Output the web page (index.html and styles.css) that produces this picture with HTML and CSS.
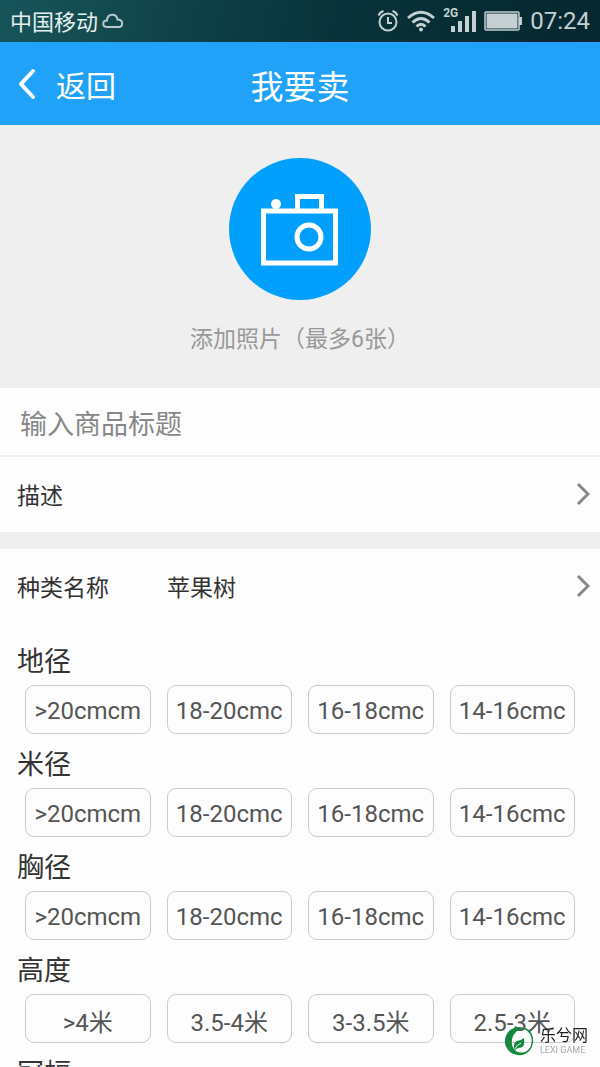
FILE: index.html
```html
<!DOCTYPE html>
<html lang="zh-CN">
<head>
    <meta charset="utf-8">
    <meta name="viewport" content="width=device-width, initial-scale=1">
    <title>我要卖</title>
    <link rel="stylesheet" href="styles.css">
</head>
<body>
    <div class="status-bar">
        <span class="carrier">中国移动</span>
        <svg class="cloud" width="22" height="16" viewBox="0 0 22 16" fill="none" stroke="#b9c9cb" stroke-width="2">
            <path d="M5 14C0 14 0 7.500 5 7.500C5.500 0 14.500 0 15.500 6.500C21.500 6.500 21.500 14 17 14Z"/>
        </svg>
        <div class="status-icons">
            <svg width="22" height="24" viewBox="0 0 22 24" fill="none" stroke="#c4d0d2" stroke-width="2">
                <circle cx="11" cy="13" r="8.500"/>
                <path d="M11 8V14H15M1.500 6.500Q3 3 6.500 2M20.500 6.500Q19 3 15.500 2"/>
            </svg>
            <svg width="28" height="22" viewBox="0 0 28 22" fill="none" stroke="#c4d0d2" stroke-width="3">
                <path d="M1 8Q14 -3.500 27 8M5.500 12.500Q14 4.500 22.500 12.500M9.500 16.500Q14 12 18.500 16.500"/>
                <circle cx="14" cy="19.500" r="2" fill="#c4d0d2" stroke="none"/>
            </svg>
            <div class="signal">
                <span class="network">2G</span>
                <svg width="25" height="21" viewBox="0 0 25 21" fill="#c4d0d2">
                    <path d="M0 15h4v6H0zM7 10h4v11H7zM14 5h4v16h-4zM21 0h4v21h-4z"/>
                </svg>
            </div>
            <svg width="38" height="20" viewBox="0 0 38 20">
                <rect x="1" y="1" width="34" height="18" rx="1" fill="none" stroke="#c4d0d2" stroke-width="1.500"/>
                <rect x="2.500" y="2.500" width="31" height="15" fill="#c4d0d2"/>
                <path d="M35 6h3v8h-3z" fill="#c4d0d2"/>
            </svg>
            <span class="clock">07:24</span>
        </div>
    </div>

    <header class="nav-bar">
        <button type="button" class="back">
            <svg width="18" height="32" viewBox="0 0 18 32" fill="none" stroke="#fff" stroke-width="4" stroke-linecap="round" stroke-linejoin="round">
                <path d="M15 3L3 16L15 29"/>
            </svg>
            返回
        </button>
        <h1>我要卖</h1>
    </header>

    <main>
        <section class="photo">
            <button type="button" class="add-photo" aria-label="添加照片">
                <svg width="142" height="142" viewBox="0 0 142 142" fill="none" stroke="#fff" stroke-width="5">
                    <rect x="34.500" y="53" width="72" height="52"/>
                    <path d="M68.500 53V38.500H92.500V53"/>
                    <circle cx="80" cy="79" r="12"/>
                    <path d="M47 45V53"/>
                    <circle cx="47" cy="46" r="5" fill="#fff" stroke="none"/>
                </svg>
            </button>
            <p>添加照片（最多6张）</p>
        </section>

        <input type="text" class="title-input" placeholder="输入商品标题" aria-label="商品标题">

        <button type="button" class="row">
            <span class="row-label">描述</span>
            <svg class="arrow" width="14" height="24" viewBox="0 0 14 24"><path d="M2 2L12 12L2 22"/></svg>
        </button>

        <div class="divider"></div>

        <button type="button" class="row">
            <span class="row-label">种类名称</span>
            <span>苹果树</span>
            <svg class="arrow" width="14" height="24" viewBox="0 0 14 24"><path d="M2 2L12 12L2 22"/></svg>
        </button>

        <div class="groups">
            <section class="group">
                <h2>地径</h2>
                <div class="options">
                    <button type="button">&gt;20cmcm</button>
                    <button type="button">18-20cmc</button>
                    <button type="button">16-18cmc</button>
                    <button type="button">14-16cmc</button>
                </div>
            </section>
            <section class="group">
                <h2>米径</h2>
                <div class="options">
                    <button type="button">&gt;20cmcm</button>
                    <button type="button">18-20cmc</button>
                    <button type="button">16-18cmc</button>
                    <button type="button">14-16cmc</button>
                </div>
            </section>
            <section class="group">
                <h2>胸径</h2>
                <div class="options">
                    <button type="button">&gt;20cmcm</button>
                    <button type="button">18-20cmc</button>
                    <button type="button">16-18cmc</button>
                    <button type="button">14-16cmc</button>
                </div>
            </section>
            <section class="group">
                <h2>高度</h2>
                <div class="options">
                    <button type="button">&gt;4米</button>
                    <button type="button">3.5-4米</button>
                    <button type="button">3-3.5米</button>
                    <button type="button">2.5-3米</button>
                </div>
            </section>
            <section class="group">
                <h2>冠幅</h2>
            </section>
        </div>
    </main>

    <div class="watermark">
        <svg width="30" height="30" viewBox="0 0 30 30">
            <path d="M21 2.500A14 14 0 1 0 28 20C25 25 21 27 17 26.500C10 26 7 20 8 14C9 7 14 3 21 2.500Z" fill="#15883e"/>
            <path d="M20 2Q29 6 28.500 16Q27 27 16 28.500" fill="none" stroke="#15883e" stroke-width="1.500"/>
            <path d="M20 12Q22 22 14 22L10 25Q9 16 13 15Q17 14.500 20 12Z" fill="#15883e"/>
            <path d="M10.500 23.500Q13 18.500 17 17" fill="none" stroke="#fff"/>
        </svg>
        <div class="brand">
            <span class="brand-name">乐兮网</span>
            <span class="brand-sub">LEXI GAME</span>
        </div>
    </div>
</body>
</html>
```
FILE: styles.css
```css
* {
    box-sizing: border-box;
}

body {
    margin: 0;
    height: 100vh;
    display: flex;
    flex-direction: column;
    overflow: hidden;
    background-color: #fdfdfd;
    color: #333;
    font-family: Roboto, "Noto Sans CJK SC", sans-serif;
}

button {
    border: none;
    background: none;
    color: inherit;
    font-family: inherit;
    cursor: pointer;
}

h1, h2, p {
    margin: 0;
    font-weight: normal;
}

.status-bar {
    flex: none;
    display: flex;
    align-items: center;
    height: 42px;
    padding: 0 10px;
    background: linear-gradient(100deg, #17555a, #08333a 55%, #06272f);
    color: #c4d0d2;
}

.carrier {
    margin-right: 4px;
    padding-bottom: 2px;
    font-size: 22px;
    color: #e6eeee;
}

.status-icons {
    display: flex;
    align-items: center;
    gap: 8px;
    margin-left: auto;
}

.signal {
    display: flex;
    align-items: flex-end;
}

.network {
    align-self: flex-start;
    width: 8px;
    margin-top: -4px;
    font-size: 12px;
    line-height: 12px;
    font-weight: bold;
}

.clock {
    font-size: 24px;
}

.nav-bar {
    flex: none;
    display: grid;
    grid-template-columns: 1fr auto 1fr;
    align-items: center;
    height: 83px;
    padding: 0 18px;
    background-color: #1fa2f8;
    color: white;
}

.back {
    display: flex;
    align-items: center;
    gap: 20px;
    padding: 0;
    font-size: 30px;
}

.nav-bar h1 {
    padding-top: 2px;
    font-size: 33px;
}

main {
    flex: 1;
    min-height: 0;
    overflow-y: auto;
    scrollbar-width: none;
}

.photo {
    display: flex;
    flex-direction: column;
    align-items: center;
    gap: 23px;
    padding: 33px 0 32px;
    background-color: #efefef;
    color: #999;
    font-size: 23px;
    line-height: 33px;
}

.add-photo {
    display: flex;
    padding: 0;
    border-radius: 50%;
    background-color: #02a0fd;
}

.title-input {
    display: block;
    width: 100%;
    height: 69px;
    padding: 6px 20px 0;
    border: none;
    border-bottom: 2px solid #efefef;
    background: none;
    font-family: inherit;
    font-size: 27px;
    outline: none;
}

.title-input::placeholder {
    color: #888;
}

.row {
    display: flex;
    align-items: center;
    width: 100%;
    height: 75px;
    padding: 0 10px 2px 17px;
    font-size: 23px;
    text-align: left;
}

.row-label {
    width: 150px;
}

.arrow {
    margin-left: auto;
    fill: none;
    stroke: #888;
    stroke-width: 3;
}

.divider {
    height: 17px;
    background-color: #efefef;
}

.groups {
    padding: 7px 25px 0;
}

.group {
    padding-top: 8px;
}

.group h2 {
    margin-left: -8px;
    font-size: 27px;
    line-height: 46px;
}

.options {
    display: grid;
    grid-template-columns: repeat(4, 1fr);
    gap: 16px;
}

.options button {
    height: 49px;
    padding: 3px 0 0;
    border: 1px solid #ccc;
    border-radius: 9px;
    color: #555;
    font-size: 24px;
    white-space: nowrap;
}

.watermark {
    position: fixed;
    right: 12px;
    bottom: 11px;
    display: flex;
    align-items: center;
    gap: 6px;
    color: #222;
}

.brand {
    display: flex;
    flex-direction: column;
}

.brand-name {
    font-size: 16px;
    line-height: 18px;
}

.brand-sub {
    color: #aaa;
    font-size: 9px;
    line-height: 10px;
}
```
